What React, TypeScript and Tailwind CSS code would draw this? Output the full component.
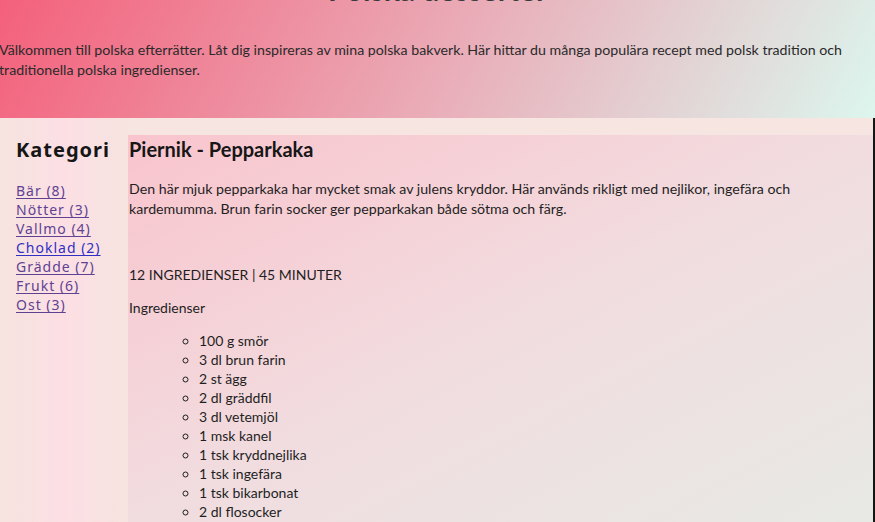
import React from "react";

const cats: { label: string; fresh?: boolean }[] = [
  { label: "Bär (8)" },
  { label: "Nötter (3)" },
  { label: "Vallmo (4)" },
  { label: "Choklad (2)", fresh: true },
  { label: "Grädde (7)" },
  { label: "Frukt (6)" },
  { label: "Ost (3)" },
];

const ingredients = [
  "100 g smör",
  "3 dl brun farin",
  "2 st ägg",
  "2 dl gräddfil",
  "3 dl vetemjöl",
  "1 msk kanel",
  "1 tsk kryddnejlika",
  "1 tsk ingefära",
  "1 tsk bikarbonat",
  "2 dl flosocker",
  "1 msk vatten",
  "1 krm salt",
];

export default function App() {
  return (
    <div
      className="w-[875px] h-[522px] overflow-hidden bg-[#f7e5e2] text-[#1f1f1f]"
      style={{ fontFamily: "Lato, 'Noto Sans', sans-serif" }}
    >
      <header className="h-[118px] overflow-hidden bg-linear-[118deg] from-[#f4607b] via-[#eaaab6] via-50% to-[#dcf6ee]">
        <h1 className="mt-[-29px] h-[36px] text-center text-[30px] leading-[36px] font-bold text-[#3a3a3a]">
          Polska desserter
        </h1>
        <p className="mt-[33px] -ml-px pr-[20px] text-[14.2px] leading-[19.5px] text-[#2a2a2a]">
          Välkommen till polska efterrätter. Låt dig inspireras av mina polska bakverk. Här hittar du många populära recept med polsk tradition och traditionella polska ingredienser.
        </p>
      </header>
      <div className="flex h-[404px] border-r-2 border-[#161616] bg-[#f7e5e2]">
        <aside className="w-[128px] shrink-0 pt-[17px] bg-linear-to-r from-[#f7e3e0] from-5% via-[#fcdfe4] via-50% to-[#f7e3e0] to-95%">
          <h3
            className="pl-[16px] text-[20px] leading-[30px] font-bold tracking-[1px] text-[#161616]"
            style={{ fontFamily: "'Noto Sans', sans-serif" }}
          >
            Kategori
          </h3>
          <ul className="mt-[16px] pl-[16px]" style={{ fontFamily: "'Noto Sans', sans-serif" }}>
            {cats.map((c) => (
              <li key={c.label} className="text-[14px] leading-[19px] tracking-[1px]">
                <a
                  href="#"
                  className={
                    c.fresh
                      ? "underline underline-offset-2 text-[#3030c4]"
                      : "underline underline-offset-2 text-[#5f4294]"
                  }
                >
                  {c.label}
                </a>
              </li>
            ))}
          </ul>
        </aside>
        <main className="flex-1 mt-[17px] pl-[1px] bg-linear-to-br from-[#f9c4cd] via-[#f1dcdf] to-[#e7e9e5]">
          <h2 className="text-[20px] leading-[28px] font-bold text-[#161616]">Piernik - Pepparkaka</h2>
          <p className="mt-[16px] pr-[60px] text-[14.2px] leading-[20px]">
            Den här mjuk pepparkaka har mycket smak av julens kryddor. Här används rikligt med nejlikor, ingefära och kardemumma. Brun farin socker ger pepparkakan både sötma och färg.
          </p>
          <p className="mt-[46px] text-[14px] leading-[20px]">12 INGREDIENSER | 45 MINUTER</p>
          <p className="mt-[13px] text-[14px] leading-[20px]">Ingredienser</p>
          <ul className="mt-[13px] pl-[70px] list-[circle] list-outside">
            {ingredients.map((i) => (
              <li key={i} className="text-[14px] leading-[19px]">
                {i}
              </li>
            ))}
          </ul>
        </main>
      </div>
    </div>
  );
}
